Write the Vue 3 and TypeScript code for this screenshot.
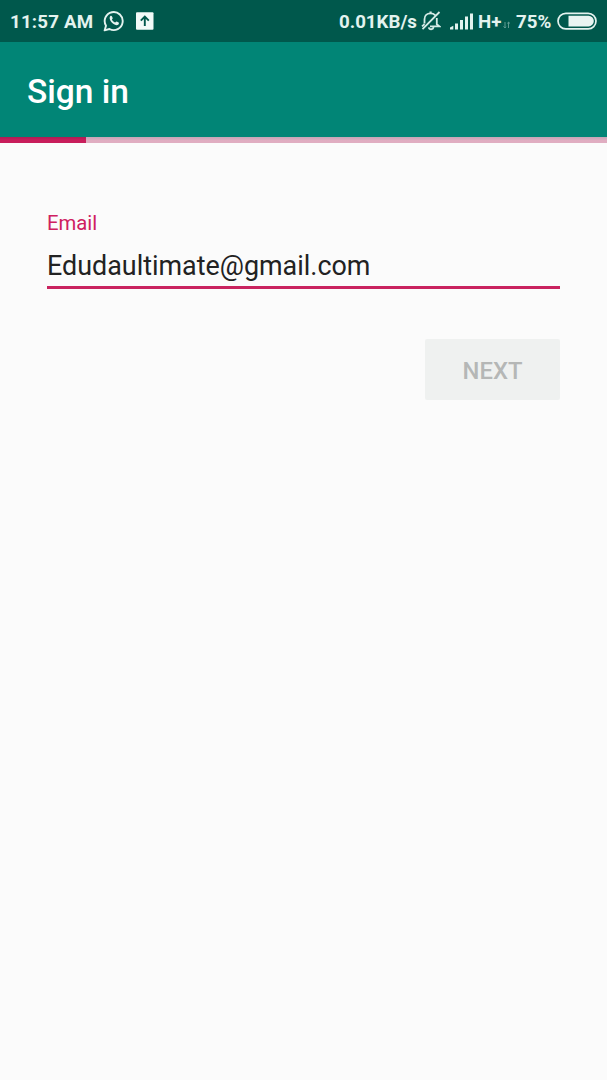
<script setup lang="ts">
import { ref } from 'vue'

const email = ref<string>('Edudaultimate@gmail.com')
const signalBars: { x: number; h: number }[] = [
  { x: 5, h: 6 },
  { x: 10, h: 9.5 },
  { x: 15, h: 13 },
  { x: 20, h: 16 },
]
</script>

<template>
  <div class="screen">
    <div class="status">
      <span class="time">11:57 AM</span>
      <svg class="whatsapp" width="22" height="22" viewBox="0 0 22 22">
        <path d="M1.6 20.4 3 15.7A9 9 0 1 1 6.5 19z" fill="none" stroke="#e3f3ef" stroke-width="1.9" stroke-linejoin="round" />
        <path d="M7.3 6.1c.6-.6 1.3-.5 1.6.1l.8 1.7c.2.5-.6 1.2-.8 1.6.6 1.4 1.8 2.5 3.2 3.1.5-.2 1.1-1.2 1.6-1l1.9 1c.6.3.4 1.3-.1 1.8-3.4 3.2-11.1-4.3-8.2-8.3z" fill="#e3f3ef" />
      </svg>
      <svg class="upload" width="18" height="18" viewBox="0 0 18 18">
        <rect width="17.5" height="17.5" y=".3" rx="1" fill="#f1faf8" />
        <path d="M8.8 14V5M4.800 8.700l4-4 4 4" fill="none" stroke="#00584c" stroke-width="1.9" />
      </svg>
      <span class="spacer"></span>
      <span class="speed">0.01KB/s</span>
      <svg class="bell" width="20" height="20" viewBox="0 0 20 20" fill="none" stroke="#d5ebe6" stroke-width="1.8">
        <path d="M3.5 12.500V8.200C3.500 4.500 6 2.400 9.500 2.400c2 0 3.500.6 4.600 1.700M15.800 7v6.200l2.700 2.200H9M1 15.400l2.500-2.300M8.500 1.300h2.200M18.500 1 1.500 18.200M7.800 16.300c.5 2.600 4.200 2.600 4.800 0" />
      </svg>
      <svg class="signal" width="24" height="17" viewBox="0 0 24 17" fill="#e3f3ef">
        <path d="M0 16.500v-1.900l3.300-1.900v3.800z" />
        <rect v-for="bar in signalBars" :key="bar.x" :x="bar.x" :y="16.5 - bar.h" width="3" :height="bar.h" />
      </svg>
      <span class="net">H+</span>
      <svg class="arrows" width="8" height="8" viewBox="0 0 8 8" fill="none" stroke="#5f9b90" stroke-width="1">
        <path d="M2 1v6M.5 5.400 2 7l1-1.300M5.500 7V1M4.500 2.500l1-1.400L7 2.500" />
      </svg>
      <span class="percent">75%</span>
      <svg class="battery" width="41" height="19" viewBox="0 0 41 19">
        <rect x="1" y="1.3" width="38" height="15.6" rx="7.8" fill="none" stroke="#e3f3ef" stroke-width="1.7" />
        <path d="M11.500 3.800h20a5.300 5.300 0 0 1 0 10.600h-20z" fill="#e9f5f2" />
      </svg>
    </div>
    <header class="bar"><h1>Sign in</h1></header>
    <div class="progress"><div class="done"></div></div>
    <main class="form">
      <label class="label" for="email">Email</label>
      <input id="email" v-model="email" class="field" type="text" />
      <button class="next" type="button" disabled>NEXT</button>
    </main>
  </div>
</template>

<style>
body {
  margin: 0;
  background: #fbfbfb;
}
</style>

<style scoped>
.screen {
  width: 607px;
  height: 1080px;
  overflow: hidden;
  background: #fbfbfb;
  font-family: Roboto, "Liberation Sans", sans-serif;
}
.status {
  height: 42px;
  box-sizing: border-box;
  padding: 0 9px 0 10px;
  display: flex;
  align-items: center;
  background: #00584c;
  color: #e3f3ef;
  font-size: 18.7px;
  font-weight: 700;
  line-height: 40px;
  white-space: nowrap;
}
.status svg {
  flex: none;
}
.status span {
  padding-top: 2px;
}
.time {
  width: 93px;
  letter-spacing: 0.2px;
}
.whatsapp {
  margin-right: 11px;
}
.spacer {
  flex: 1;
}
.speed {
  width: 82px;
}
.bell {
  margin-right: 9px;
}
.signal {
  margin-right: 4px;
}
.net {
  width: 25px;
}
.arrows {
  margin: 7px 5px 0 0;
}
.percent {
  width: 41px;
}
.bar {
  height: 95px;
  display: flex;
  align-items: center;
  padding: 5px 27px 0;
  box-sizing: border-box;
  background: #018576;
}
h1 {
  margin: 0;
  color: #fff;
  font-size: 33.5px;
  font-weight: 500;
  line-height: 40px;
}
.progress {
  height: 6px;
  background: linear-gradient(#c3a6b7, #e0adc1 60%);
}
.done {
  width: 86px;
  height: 6px;
  background: linear-gradient(#ab1d54, #c81d5b 50%);
}
.form {
  display: flex;
  flex-direction: column;
  padding: 67px 47px 0;
}
.label {
  color: #cf2060;
  font-size: 20.3px;
  line-height: 26px;
}
.field {
  box-sizing: border-box;
  width: 100%;
  height: 53px;
  margin: 0;
  padding: 10px 0 0;
  border: 0;
  border-bottom: 3px solid #c9235f;
  border-radius: 0;
  outline: 0;
  background: transparent;
  color: #222;
  font: 400 26.9px/36px Roboto, "Liberation Sans", sans-serif;
}
.next {
  align-self: flex-end;
  width: 135px;
  height: 61px;
  margin-top: 50px;
  padding: 3px 0 0;
  border: 0;
  border-radius: 2px;
  background: #eff1f0;
  color: #b5b7b6;
  font: 500 23.8px/30px Roboto, "Liberation Sans", sans-serif;
}
</style>
